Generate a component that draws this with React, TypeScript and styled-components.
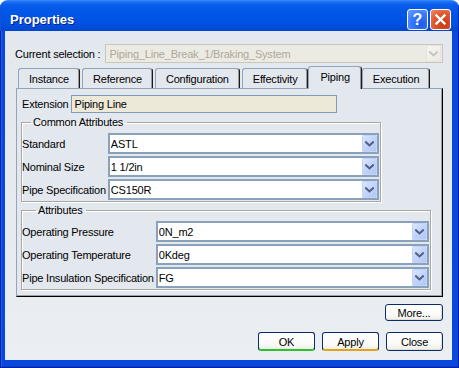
import React from 'react';
import styled, { createGlobalStyle, css } from 'styled-components';

const GlobalStyle = createGlobalStyle`
  html, body { margin: 0; padding: 0; background: #ffffff; }
  body {
    font-family: "Liberation Sans", Arial, sans-serif;
    font-size: 11px;
    letter-spacing: -0.2px;
    color: #000;
  }
  #root { width: 459px; height: 368px; }
`;

const Window = styled.div`
  width: 459px;
  height: 368px;
  display: flex;
  flex-direction: column;
  border-radius: 8px 8px 0 0;
  overflow: hidden;
`;

const TitleBar = styled.div`
  height: 31px;
  flex: none;
  box-sizing: border-box;
  padding: 8px 8px 0 10px;
  display: flex;
  align-items: center;
  gap: 2px;
  background: linear-gradient(
    to bottom,
    #3a8cf8 0px,
    #1a6ef6 2px,
    #0a5cec 5px,
    #0056e6 12px,
    #0053e2 22px,
    #004ad6 29px,
    #0044cc 31px
  );
  box-shadow: inset 1px 0 0 #1c4fd8, inset -1px 0 0 #0030b0;
`;

const Title = styled.div`
  flex: 1;
  color: #ffffff;
  font: bold 13px "Liberation Sans", Arial, sans-serif;
  letter-spacing: 0;
  text-shadow: 1px 1px 0 #0a1e8c;
`;

const CaptionButton = styled.div<{ $variant: 'help' | 'close' }>`
  width: 21px;
  height: 21px;
  box-sizing: border-box;
  border: 1px solid #ffffff;
  border-radius: 3px;
  display: flex;
  align-items: center;
  justify-content: center;
  color: #ffffff;
  font: bold 16px "Liberation Sans", Arial, sans-serif;
  letter-spacing: 0;
  ${(p) =>
    p.$variant === 'help'
      ? css`
          background: radial-gradient(circle at 70% 75%, #1c5ae8 0%, #3a7cff 55%, #6fa0ff 100%);
        `
      : css`
          background: radial-gradient(circle at 70% 75%, #c73a14 0%, #e0582f 55%, #f08a66 100%);
        `}
`;

const FrameBody = styled.div`
  flex: 1;
  display: flex;
  padding: 0 7px 8px 5px;
  background: #0848dc;
  box-shadow: inset 1px 0 0 #0020a8, inset -1px 0 0 #0020a8, inset 0 -1px 0 #0020a8,
    inset 2px 0 0 #1560f0, inset 0 -2px 0 #0a3cc8;
`;

const Client = styled.div`
  flex: 1;
  display: flex;
  flex-direction: column;
  padding: 13px 9px 0 11px;
  background: linear-gradient(to bottom, #e3e8ee 0%, #e6ebf0 60%, #ebeff3 100%);
`;

const SelectionRow = styled.div`
  display: flex;
  align-items: center;
  gap: 5px;
  height: 19px;
  margin-left: -1px;
`;

const Label = styled.span`
  white-space: nowrap;
`;

const ComboBox = styled.div<{ $disabled?: boolean }>`
  flex: 1;
  min-width: 0;
  box-sizing: border-box;
  display: flex;
  align-items: center;
  ${(p) =>
    p.$disabled
      ? css`
          height: 19px;
          border: 1px solid #c9c7ba;
          background: #ecebe3;
          color: #aca899;
          padding: 0 1px 0 3px;
        `
      : css`
          height: 21px;
          border: 2px solid #8aa1bb;
          background: #ffffff;
          color: #000;
          padding: 0 0 0 1px;
        `}
`;

const ComboText = styled.span`
  flex: 1;
  white-space: nowrap;
  overflow: hidden;
`;

const ArrowButton = styled.div<{ $disabled?: boolean }>`
  width: 15px;
  height: 17px;
  box-sizing: border-box;
  display: flex;
  align-items: center;
  justify-content: center;
  border: 1px solid ${(p) => (p.$disabled ? '#e4e3dc' : '#c3d4fb')};
  border-radius: 1px;
  background: ${(p) =>
    p.$disabled
      ? 'linear-gradient(135deg, #f6f5f0, #ebeae3)'
      : 'linear-gradient(135deg, #dce7fe 0%, #c4d5fc 45%, #b2c7f5 100%)'};
`;

const Chevron = ({ color }: { color: string }) => (
  <svg width="9" height="6" viewBox="0 0 9 6">
    <path d="M1 1.2 L4.5 4.5 L8 1.2" fill="none" stroke={color} strokeWidth="2" strokeLinecap="square" />
  </svg>
);

const TabStrip = styled.div`
  margin-top: 3px;
  height: 22px;
  display: flex;
  align-items: flex-end;
  gap: 2px;
  padding-left: 2px;
  position: relative;
  z-index: 1;
`;

const Tab = styled.div<{ $active?: boolean }>`
  box-sizing: border-box;
  height: 20px;
  padding: 0 10px;
  display: flex;
  align-items: center;
  white-space: nowrap;
  background: #e3e8ee;
  border: 1px solid #93a5b8;
  border-bottom: none;
  border-right: 1px solid #1a1a1a;
  box-shadow: inset -1px 0 0 #9a9a9a;
  border-radius: 3px 3px 0 0;
  ${(p) =>
    p.$active &&
    css`
      height: 23px;
      margin: 0 -2px -1px;
      padding: 0 11px 2px;
    `}
`;

const Panel = styled.div`
  box-sizing: border-box;
  display: flex;
  flex-direction: column;
  background: #e3e8ee;
  border-top: 1px solid #93a5b8;
  border-left: 1px solid #93a5b8;
  border-right: 1px solid #000;
  border-bottom: 1px solid #000;
  box-shadow: inset -1px -1px 0 #a0a0a0;
  padding: 6px 11px 6px 4px;
`;

const ExtensionRow = styled.div`
  display: flex;
  align-items: center;
  gap: 2px;
  margin-left: 1px;
  height: 18px;
`;

const ReadOnlyField = styled.div`
  width: 266px;
  height: 18px;
  box-sizing: border-box;
  border: 1px solid #7f9db9;
  background: #ece9d8;
  padding-left: 3px;
  display: flex;
  align-items: center;
`;

const Group = styled.fieldset<{ $width?: number; $top: number }>`
  margin: ${(p) => p.$top}px 0 0 0;
  padding: 4px 1px 1px 0;
  min-width: 0;
  box-sizing: border-box;
  width: ${(p) => (p.$width ? `${p.$width}px` : 'auto')};
  border: 1px solid #a8a8a0;
  box-shadow: inset 1px 1px 0 #ffffff, 1px 1px 0 #ffffff;
`;

const Legend = styled.legend<{ $indent: number }>`
  margin-left: ${(p) => p.$indent}px;
  padding: 0 4px 0 2px;
  line-height: 13px;
  height: 13px;
`;

const FieldGrid = styled.div`
  display: grid;
  grid-template-columns: auto 1fr;
  column-gap: 2px;
  row-gap: 2px;
  align-items: center;
`;

const ButtonArea = styled.div`
  display: flex;
  flex-direction: column;
  align-items: flex-end;
  margin-top: 7px;
  gap: 11px;
`;

const ButtonRow = styled.div`
  display: flex;
  gap: 7px;
`;

const PushButton = styled.button<{ $accent?: string; $small?: boolean }>`
  width: ${(p) => (p.$small ? 58 : 57)}px;
  height: ${(p) => (p.$small ? 17 : 19)}px;
  box-sizing: border-box;
  margin: 0;
  padding: 0;
  font-family: "Liberation Sans", Arial, sans-serif;
  font-size: 11px;
  letter-spacing: -0.2px;
  color: #000;
  border: 1px solid #0a2c6a;
  border-radius: 3px;
  background: linear-gradient(to bottom, #ffffff 0%, #fbfbf9 60%, #eeede8 100%);
  box-shadow: inset -1px -1px 0 #e0ded6;
  ${(p) =>
    p.$accent &&
    css`
      border-bottom-color: ${p.$accent};
      box-shadow: inset 0 -1px 0 ${p.$accent};
    `}
`;

const Combo = ({ value }: { value: string }) => (
  <ComboBox>
    <ComboText>{value}</ComboText>
    <ArrowButton>
      <Chevron color="#4d6185" />
    </ArrowButton>
  </ComboBox>
);

const commonRows = [
  ['Standard', 'ASTL'],
  ['Nominal Size', '1 1/2in'],
  ['Pipe Specification', 'CS150R'],
];

const attrRows = [
  ['Operating Pressure', '0N_m2'],
  ['Operating Temperature', '0Kdeg'],
  ['Pipe Insulation Specification', 'FG'],
];

const tabs = ['Instance', 'Reference', 'Configuration', 'Effectivity', 'Piping', 'Execution'];

export default function App() {
  return (
    <>
      <GlobalStyle />
      <Window>
        <TitleBar>
          <Title>Properties</Title>
          <CaptionButton $variant="help">?</CaptionButton>
          <CaptionButton $variant="close">
            <svg width="13" height="13" viewBox="0 0 13 13">
              <path d="M2.5 2.5 L10.5 10.5 M10.5 2.5 L2.5 10.5" stroke="#fff" strokeWidth="2.4" strokeLinecap="square" />
            </svg>
          </CaptionButton>
        </TitleBar>
        <FrameBody>
          <Client>
            <SelectionRow>
              <Label>Current selection :</Label>
              <ComboBox $disabled>
                <ComboText>Piping_Line_Break_1/Braking_System</ComboText>
                <ArrowButton $disabled>
                  <Chevron color="#c8c6bc" />
                </ArrowButton>
              </ComboBox>
            </SelectionRow>

            <TabStrip>
              {tabs.map((t) => (
                <Tab key={t} $active={t === 'Piping'}>
                  {t}
                </Tab>
              ))}
            </TabStrip>

            <Panel>
              <ExtensionRow>
                <Label>Extension</Label>
                <ReadOnlyField>Piping Line</ReadOnlyField>
              </ExtensionRow>

              <Group $width={360} $top={3}>
                <Legend $indent={9}>Common Attributes</Legend>
                <FieldGrid>
                  {commonRows.map(([l, v]) => (
                    <React.Fragment key={l}>
                      <Label>{l}</Label>
                      <Combo value={v} />
                    </React.Fragment>
                  ))}
                </FieldGrid>
              </Group>

              <Group $top={2}>
                <Legend $indent={14}>Attributes</Legend>
                <FieldGrid>
                  {attrRows.map(([l, v]) => (
                    <React.Fragment key={l}>
                      <Label>{l}</Label>
                      <Combo value={v} />
                    </React.Fragment>
                  ))}
                </FieldGrid>
              </Group>
            </Panel>

            <ButtonArea>
              <PushButton $small>More...</PushButton>
              <ButtonRow>
                <PushButton $accent="#2fbf2f">OK</PushButton>
                <PushButton $accent="#e2a21c">Apply</PushButton>
                <PushButton>Close</PushButton>
              </ButtonRow>
            </ButtonArea>
          </Client>
        </FrameBody>
      </Window>
    </>
  );
}
